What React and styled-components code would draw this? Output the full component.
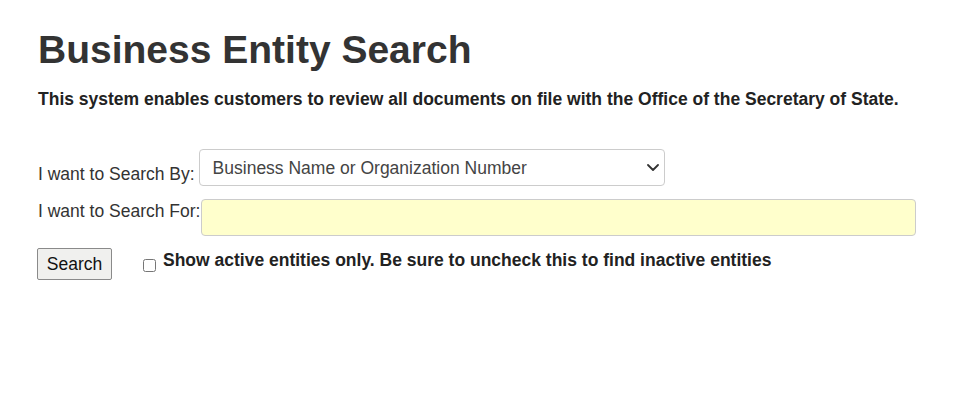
import React from "react";
import styled, { createGlobalStyle } from "styled-components";

const Global = createGlobalStyle`
  html, body { margin: 0; padding: 0; background: #fff; }
  body { font-family: "Liberation Sans", Arial, sans-serif; color: #333; }
`;

const Page = styled.main`
  padding: 27px 30px 0 38px;
`;

const Title = styled.h1`
  margin: 0;
  font-size: 39px;
  line-height: 45px;
  font-weight: 700;
  color: #333;
`;

const Intro = styled.p`
  margin: 16.5px 0 0;
  font-size: 17.5px;
  line-height: 20px;
  font-weight: 700;
  color: #222;
`;

const Form = styled.form`
  margin-top: 40.5px;
  display: flex;
  flex-direction: column;
`;

const Row = styled.div`
  display: flex;
  align-items: ${(p) => p.$align || "flex-end"};
  margin-top: ${(p) => p.$gap || 0}px;
`;

const Label = styled.label`
  font-size: 17.5px;
  line-height: 20px;
  color: #333;
  padding-bottom: ${(p) => p.$pb || 0}px;
  white-space: nowrap;
`;

const SelectWrap = styled.div`
  position: relative;
  margin-left: 4px;
  display: flex;
`;

const Select = styled.select`
  appearance: none;
  -webkit-appearance: none;
  width: 466px;
  height: 37px;
  padding: 0 30px 0 13px;
  font-family: "Liberation Sans", Arial, sans-serif;
  font-size: 17.5px;
  color: #444;
  background: #fff;
  border: 1px solid #ccc;
  border-radius: 4px;
`;

const Chevron = styled.svg`
  position: absolute;
  right: 6px;
  top: 15px;
  width: 12px;
  height: 7px;
  pointer-events: none;
`;

const Input = styled.input`
  margin-left: 1px;
  width: 715px;
  height: 37px;
  box-sizing: border-box;
  background: #ffffcc;
  border: 1px solid #ccc;
  border-radius: 4px;
  font-size: 17.5px;
`;

const Button = styled.button`
  width: 75px;
  height: 32px;
  padding: 0;
  font-family: "Liberation Sans", Arial, sans-serif;
  font-size: 17.5px;
  color: #111;
  background: #f0f0ee;
  border: 1px solid #8a8a8a;
  border-radius: 2px;
  margin-left: -1px;
`;

const CheckWrap = styled.label`
  display: flex;
  align-items: flex-end;
  margin-left: 31px;
  margin-top: 1.5px;
`;

const Box = styled.input`
  width: 13px;
  height: 13px;
  margin: 0 7px -2px 0;
`;

const CheckText = styled.span`
  font-size: 17.5px;
  line-height: 20px;
  font-weight: 700;
  color: #222;
`;

export default function App() {
  return (
    <>
      <Global />
      <Page>
        <Title>Business Entity Search</Title>
        <Intro>
          This system enables customers to review all documents on file with the Office of the Secretary of State.
        </Intro>
        <Form onSubmit={(e) => e.preventDefault()}>
          <Row>
            <Label $pb={2.5}>I want to Search By:</Label>
            <SelectWrap>
              <Select defaultValue="name">
                <option value="name">Business Name or Organization Number</option>
              </Select>
              <Chevron viewBox="0 0 12 7" aria-hidden="true">
                <path d="M1 1l5 5 5-5" fill="none" stroke="#333" strokeWidth="1.8" strokeLinecap="round" strokeLinejoin="round" />
              </Chevron>
            </SelectWrap>
          </Row>
          <Row $gap={13}>
            <Label $pb={15}>I want to Search For:</Label>
            <Input type="text" />
          </Row>
          <Row $gap={12} $align="flex-start">
            <Button type="submit">Search</Button>
            <CheckWrap>
              <Box type="checkbox" />
              <CheckText>Show active entities only. Be sure to uncheck this to find inactive entities</CheckText>
            </CheckWrap>
          </Row>
        </Form>
      </Page>
    </>
  );
}
